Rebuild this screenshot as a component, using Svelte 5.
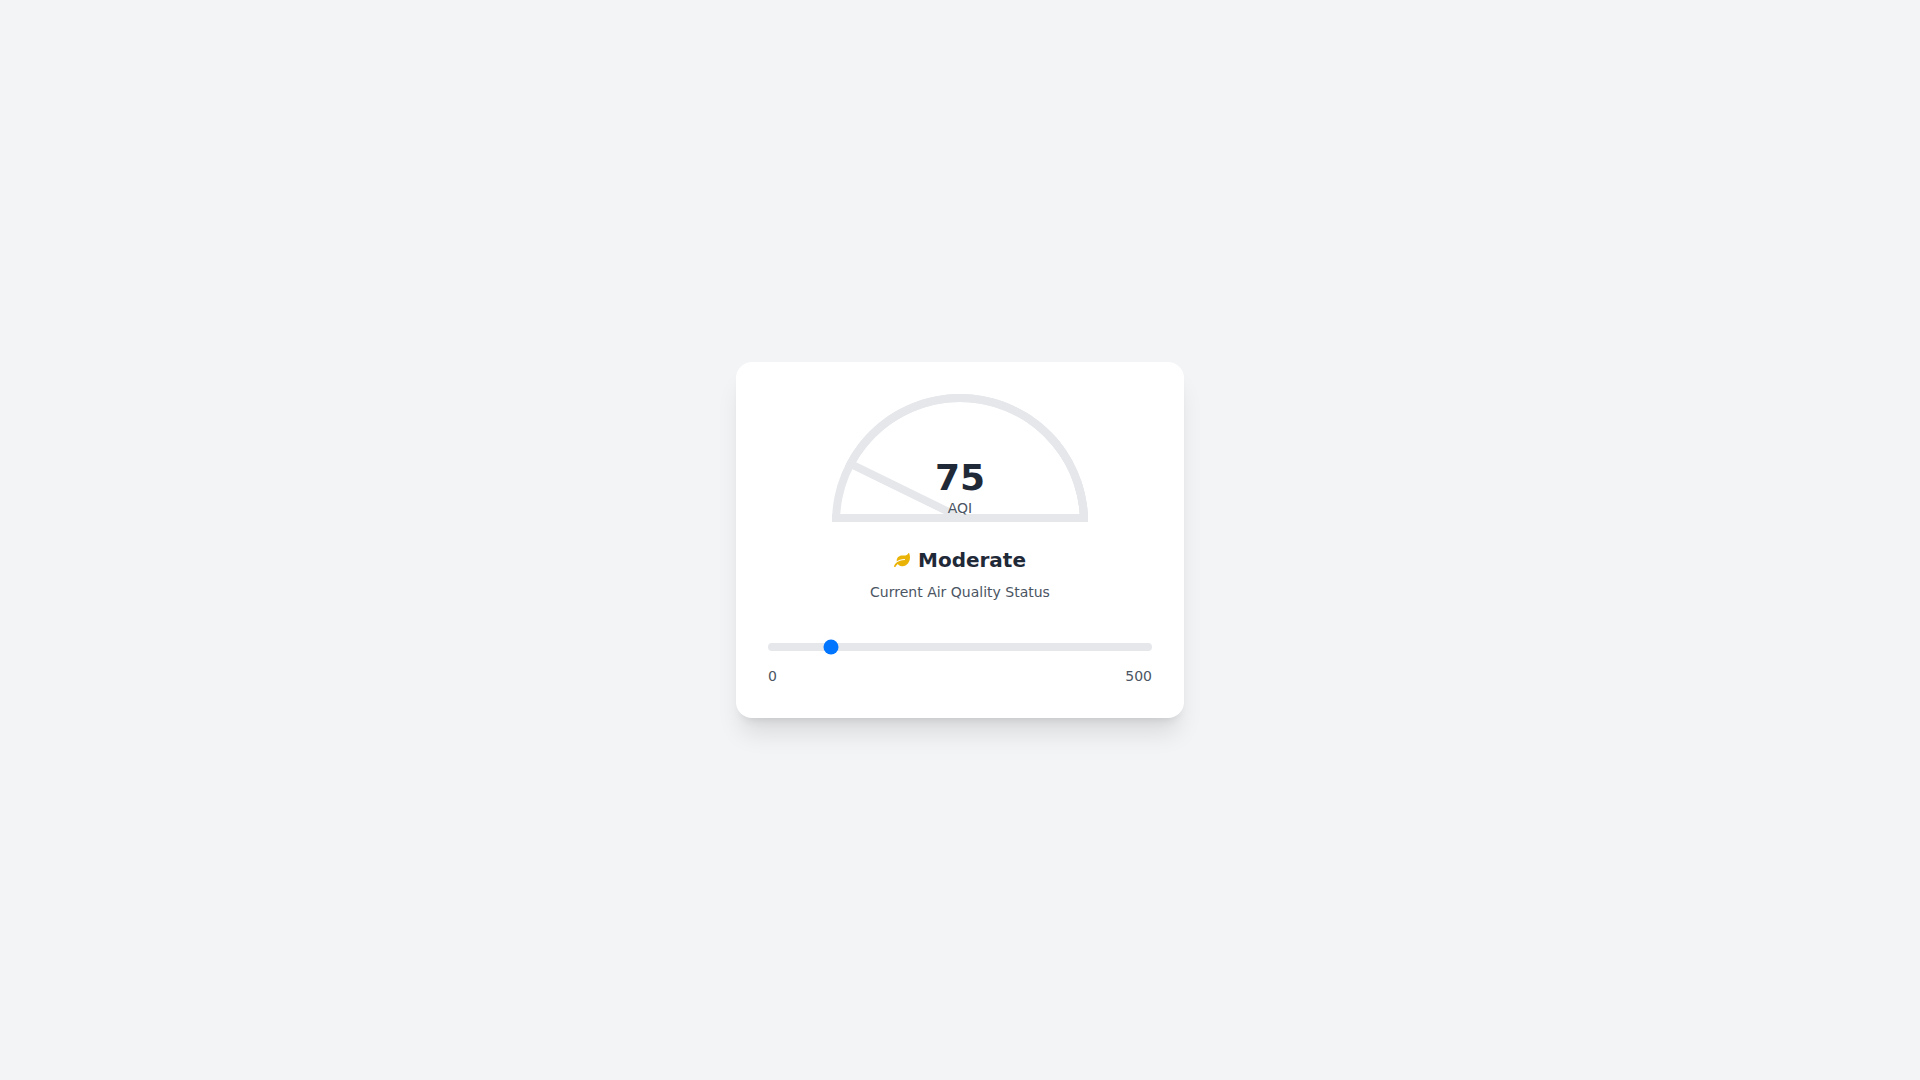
<script>
	let aqi = $state(75);

	const max = 500;
	// full scale stops a bit early so the needle stays above the base line
	const sweep = 174;

	const levels = [
		{ limit: 50, label: 'Good', color: '#22c55e' },
		{ limit: 100, label: 'Moderate', color: '#eab308' },
		{ limit: 150, label: 'Unhealthy for Sensitive Groups', color: '#f97316' },
		{ limit: 200, label: 'Unhealthy', color: '#ef4444' },
		{ limit: 300, label: 'Very Unhealthy', color: '#a855f7' },
		{ limit: 500, label: 'Hazardous', color: '#881337' }
	];

	let level = $derived(levels.find((l) => aqi <= l.limit));
	let angle = $derived((aqi / max) * sweep);
</script>

<main>
	<div class="card">
		<div class="gauge">
			<div class="arc"></div>
			<div class="arc needle" style="transform: rotate({angle}deg)"></div>
			<div class="reading">
				<span class="value">{aqi}</span>
				<span class="unit">AQI</span>
			</div>
		</div>

		<div class="status">
			<h2>
				<svg viewBox="0 0 576 512" fill={level.color} aria-hidden="true">
					<path
						d="M546.2 9.7c-5.6-12.5-21.6-13-28.3-1.2C486.9 62.4 431.4 96 368 96h-80C182 96 96 182 96 288c0 7 .8 13.7 1.5 20.5C161.3 262.8 253.4 224 384 224c8.8 0 16 7.2 16 16s-7.2 16-16 16C132.6 256 26 410.1 2.4 468c-6.6 16.3 1.2 34.9 17.5 41.6 16.4 6.8 35-1.1 41.8-17.3 1.5-3.6 20.9-47.9 71.9-90.6 32.4 43.9 94 85.8 174.9 77.2C465.5 467.5 576 326.7 576 154.3c0-50.2-10.8-102.2-29.8-144.6z"
					/>
				</svg>
				{level.label}
			</h2>
			<p>Current Air Quality Status</p>
		</div>

		<div class="control">
			<input type="range" min="0" {max} bind:value={aqi} aria-label="Air quality index" />
			<div class="limits">
				<span>0</span>
				<span>{max}</span>
			</div>
		</div>
	</div>
</main>

<style>
	:global(body) {
		margin: 0;
		background: #f3f4f6;
	}

	main {
		min-height: 100vh;
		display: flex;
		align-items: center;
		justify-content: center;
		font-family: 'DejaVu Sans', sans-serif;
		font-size: 16px;
		line-height: 24px;
		color: #4b5563;
	}

	.card {
		box-sizing: border-box;
		width: 100%;
		max-width: 448px;
		padding: 32px;
		background: #fff;
		border-radius: 16px;
		box-shadow:
			0 20px 25px -5px rgba(0, 0, 0, 0.1),
			0 8px 10px -6px rgba(0, 0, 0, 0.1);
	}

	/* half circle gauge */
	.gauge {
		position: relative;
		width: 256px;
		height: 128px;
		margin: 0 auto;
		overflow: hidden;
	}

	.arc {
		position: absolute;
		inset: 0;
		box-sizing: border-box;
		border: 8px solid #e5e7eb;
		border-radius: 128px 128px 0 0;
	}

	.needle {
		transform-origin: bottom center;
		transition: transform 0.5s;
	}

	.reading {
		position: absolute;
		inset: 0;
		padding-bottom: 4px;
		display: flex;
		flex-direction: column;
		align-items: center;
		justify-content: flex-end;
	}

	.value {
		font-size: 36px;
		line-height: 40px;
		font-weight: bold;
		color: #1f2937;
	}

	.unit,
	.status p,
	.limits {
		font-size: 14px;
		line-height: 20px;
	}

	.status {
		margin-top: 24px;
	}

	.status h2 {
		display: flex;
		align-items: center;
		justify-content: center;
		gap: 8px;
		margin: 0;
		font-size: 20px;
		line-height: 28px;
		color: #1f2937;
	}

	.status svg {
		width: 16px;
		height: 16px;
	}

	.status p {
		margin: 8px 0 0;
		text-align: center;
	}

	.control {
		margin-top: 32px;
	}

	input {
		appearance: none;
		width: 100%;
		height: 8px;
		margin: 0;
		background: #e5e7eb;
		border-radius: 4px;
		cursor: pointer;
	}

	.limits {
		display: flex;
		justify-content: space-between;
		margin-top: 8px;
	}
</style>
